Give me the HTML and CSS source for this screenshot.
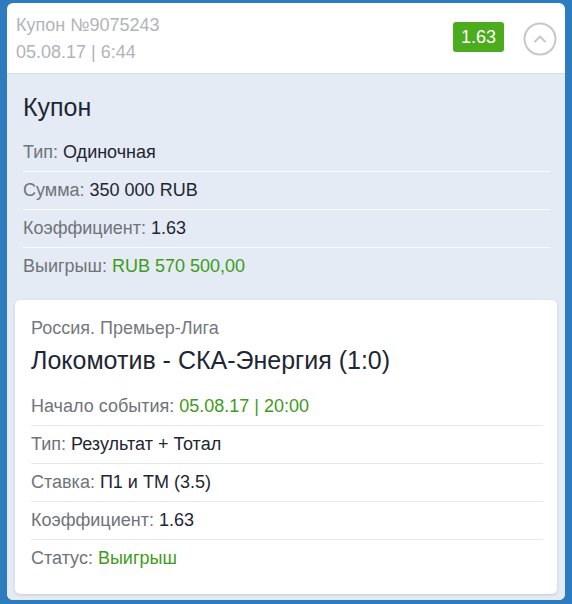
FILE: index.html
```html
<!DOCTYPE html>
<html lang="ru">
<head>
    <meta charset="UTF-8">
    <meta name="viewport" content="width=device-width, initial-scale=1.0">
    <title>Купон</title>
    <link rel="stylesheet" href="styles.css">
</head>
<body>
    <div class="coupon">
        <div class="coupon-header">
            <div class="coupon-meta">
                <div>Купон №9075243</div>
                <div>05.08.17 | 6:44</div>
            </div>
            <div class="coupon-odds">1.63</div>
            <span class="collapse-toggle">
                <svg width="34" height="34" viewBox="0 0 34 34">
                    <circle cx="17" cy="17" r="15.5" fill="none" stroke="#c4c7cb" stroke-width="2"/>
                    <path d="M12 19.5 L17 14.5 L22 19.5" fill="none" stroke="#c4c7cb" stroke-width="2" stroke-linecap="round" stroke-linejoin="round"/>
                </svg>
            </span>
        </div>
        <div class="coupon-body">
            <h2 class="coupon-title">Купон</h2>
            <div class="info-list">
                <div class="info-row"><span class="label">Тип:</span> Одиночная</div>
                <div class="info-row"><span class="label">Сумма:</span> 350 000 RUB</div>
                <div class="info-row"><span class="label">Коэффициент:</span> 1.63</div>
                <div class="info-row"><span class="label">Выигрыш:</span> <span class="green">RUB 570 500,00</span></div>
            </div>
            <div class="event-card">
                <div class="event-league">Россия. Премьер-Лига</div>
                <div class="event-name">Локомотив - СКА-Энергия (1:0)</div>
                <div class="info-list event-list">
                    <div class="info-row"><span class="label">Начало события:</span> <span class="green">05.08.17 | 20:00</span></div>
                    <div class="info-row"><span class="label">Тип:</span> Результат + Тотал</div>
                    <div class="info-row"><span class="label">Ставка:</span> П1 и ТМ (3.5)</div>
                    <div class="info-row"><span class="label">Коэффициент:</span> 1.63</div>
                    <div class="info-row"><span class="label">Статус:</span> <span class="green">Выигрыш</span></div>
                </div>
            </div>
        </div>
    </div>
</body>
</html>
```

FILE: styles.css
```css
body {
    margin: 0;
    background-color: #2e7cc0;
    font-family: "Liberation Sans", Arial, sans-serif;
    color: #1e2632;
}
.coupon {
    margin: 3px 7px 0;
    background-color: white;
    border-radius: 6px;
    overflow: hidden;
}
.coupon-header {
    display: flex;
    align-items: center;
    height: 70px;
    padding: 0 8px 0 9px;
    border-bottom: 1px solid #d6dce4;
}
.coupon-meta {
    flex: 1;
    color: #b1b4b9;
    font-size: 18px;
    line-height: 27px;
    padding-top: 2px;
}
.coupon-odds {
    background-color: #4dab1e;
    color: white;
    font-size: 18px;
    line-height: 30px;
    padding: 0 8px;
    border-radius: 3px;
    margin-right: 19px;
    margin-bottom: 2px;
}
.collapse-toggle {
    display: flex;
    width: 34px;
    height: 34px;
    margin-top: 2px;
}
.coupon-body {
    background-color: #e4ebf4;
    padding: 18px 8px 6px;
}
.coupon-title {
    margin: 0 0 12px 8px;
    font-size: 25px;
    font-weight: normal;
    line-height: 30px;
    color: #1d2733;
}
.info-list {
    padding: 0 7px 0 8px;
    margin-bottom: 15px;
}
.info-row {
    font-size: 18px;
    line-height: 37px;
    border-bottom: 1px solid #fbfcfd;
}
.info-row:last-child {
    border-bottom: none;
}
.label {
    color: #6f747a;
}
.green {
    color: #3f9b1c;
}
.event-card {
    background-color: white;
    border-radius: 5px;
    box-shadow: 0 1px 3px rgba(0, 0, 0, 0.15);
    padding: 17px 14px 17px 16px;
}
.event-league {
    color: #75797f;
    font-size: 18px;
    line-height: 22px;
}
.event-name {
    font-size: 25px;
    line-height: 30px;
    margin: 6px 0 13px;
    color: #1d2733;
}
.event-list {
    padding: 0;
    margin: 0;
}
.event-list .info-row {
    border-bottom-color: #e6e8eb;
}
.event-list .info-row:last-child {
    border-bottom: none;
}
```
